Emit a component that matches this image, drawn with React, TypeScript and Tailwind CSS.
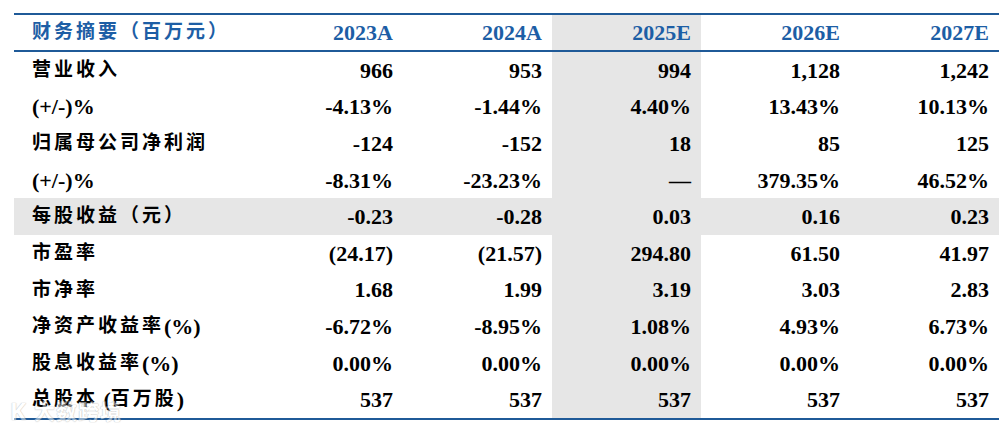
const FONT = '"Liberation Serif", "Noto Sans CJK SC", serif';

type Row = { label: string; values: string[]; shaded?: boolean };

const YEARS = ['2023A', '2024A', '2025E', '2026E', '2027E'];

const ROWS: Row[] = [
  { label: '营业收入', values: ['966', '953', '994', '1,128', '1,242'] },
  { label: '(+/-)%', values: ['-4.13%', '-1.44%', '4.40%', '13.43%', '10.13%'] },
  { label: '归属母公司净利润', values: ['-124', '-152', '18', '85', '125'] },
  { label: '(+/-)%', values: ['-8.31%', '-23.23%', '—', '379.35%', '46.52%'] },
  { label: '每股收益（元）', values: ['-0.23', '-0.28', '0.03', '0.16', '0.23'], shaded: true },
  { label: '市盈率', values: ['(24.17)', '(21.57)', '294.80', '61.50', '41.97'] },
  { label: '市净率', values: ['1.68', '1.99', '3.19', '3.03', '2.83'] },
  { label: '净资产收益率(%)', values: ['-6.72%', '-8.95%', '1.08%', '4.93%', '6.73%'] },
  { label: '股息收益率(%)', values: ['0.00%', '0.00%', '0.00%', '0.00%', '0.00%'] },
  { label: '总股本 (百万股)', values: ['537', '537', '537', '537', '537'] },
];

const GRID = 'grid grid-cols-[240px_149px_149px_149px_149px_149px]';

// latin runs are set in Times at the figures' size, CJK runs get the wider spacing
function Label({ text }: { text: string }) {
  const parts = text.match(/[\x20-\x7e]+|[^\x20-\x7e]+/g) ?? [];
  return (
    <>
      {parts.map((p, i) =>
        /^[\x20-\x7e]+$/.test(p) ? (
          <span key={i} className="text-[22px] tracking-normal whitespace-pre">
            {p}
          </span>
        ) : (
          <span key={i} className="text-[19px] tracking-[3px]">
            {p}
          </span>
        ),
      )}
    </>
  );
}

export default function App() {
  return (
    <div className="relative w-[1005px] h-[428px] bg-white pt-[13px] pl-[14px]" style={{ fontFamily: FONT }}>
      <div className="w-[985px] border-t-2 border-b-2 border-[#1f5a98]">
        {/* Header */}
        <div className={`${GRID} h-[37px] border-b-2 border-[#1f5a98] text-[#1d5ea5] font-bold`}>
          <div className="flex items-center pl-[18px] text-[19px] tracking-[3px]">财务摘要（百万元）</div>
          {YEARS.map((y, i) => (
            <div
              key={y}
              className={`flex items-center justify-end pr-[10px] text-[22px] ${i === 2 ? 'bg-[#e6e6e6]' : ''}`}
            >
              {y}
            </div>
          ))}
        </div>

        {/* Body */}
        {ROWS.map((row, r) => (
          <div key={r} className={`${GRID} h-[36.6px] text-black font-bold ${row.shaded ? 'bg-[#e6e6e6]' : ''}`}>
            <div className="flex items-center pl-[18px] whitespace-nowrap">
              <Label text={row.label} />
            </div>
            {row.values.map((v, i) => (
              <div
                key={i}
                className={`flex items-center justify-end pr-[10px] text-[22px] ${i === 2 ? 'bg-[#e6e6e6]' : ''}`}
              >
                {v}
              </div>
            ))}
          </div>
        ))}
      </div>

      {/* watermark */}
      <div className="absolute left-[10px] top-[393px] flex items-center gap-[8px] opacity-50 pointer-events-none">
        <span
          className="text-[24px] font-bold text-white"
          style={{ fontFamily: '"Noto Sans", sans-serif', textShadow: '0 0 1px #888, 0 0 1px #888' }}
        >
          K
        </span>
        <span
          className="text-[21px] font-bold text-white tracking-[1px]"
          style={{ fontFamily: '"Noto Sans CJK SC", sans-serif', textShadow: '0 0 1px #888, 0 0 1px #888' }}
        >
          大数跨境
        </span>
      </div>
    </div>
  );
}
